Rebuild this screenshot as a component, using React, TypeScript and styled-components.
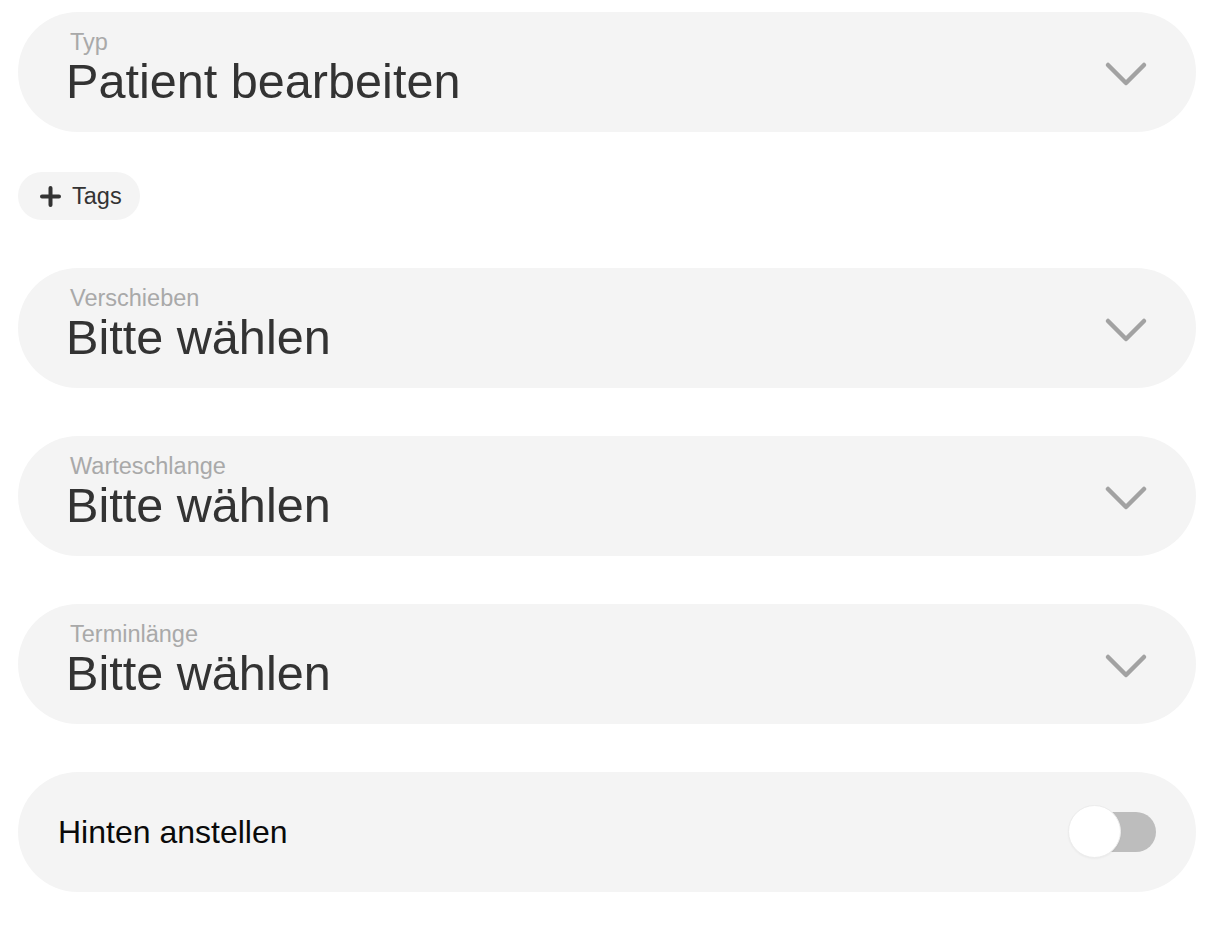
import React from "react";
import styled, { createGlobalStyle } from "styled-components";

const GlobalStyle = createGlobalStyle`
  html, body {
    margin: 0;
    padding: 0;
    background: #ffffff;
    font-family: "Liberation Sans", Arial, Helvetica, sans-serif;
  }
  * { box-sizing: border-box; }
`;

const Page = styled.div`
  display: flex;
  flex-direction: column;
  padding: 12px 18px;
`;

const Field = styled.div<{ $gapAfter: number }>`
  display: flex;
  align-items: center;
  height: 120px;
  border-radius: 60px;
  background: #f4f4f4;
  padding: 0 48px 0 48px;
  margin-bottom: ${(p) => p.$gapAfter}px;
`;

const FieldText = styled.div`
  flex: 1;
  display: flex;
  flex-direction: column;
  align-self: stretch;
  padding-top: 18px;
`;

const Label = styled.div`
  font-size: 23.5px;
  line-height: 24px;
  color: #a9a9a9;
  padding-left: 4px;
`;

const Value = styled.div`
  font-size: 48.6px;
  line-height: 48px;
  color: #333333;
  margin-top: 3px;
`;

const Chevron = styled.svg`
  width: 44px;
  height: 28px;
  margin-top: 6px;
  color: #a2a2a2;
  flex: none;
`;

const TagButton = styled.button`
  align-self: flex-start;
  display: flex;
  align-items: center;
  gap: 11px;
  height: 48px;
  padding: 0 18px 0 22px;
  border: none;
  border-radius: 24px;
  background: #f4f4f4;
  color: #333333;
  font-family: "Liberation Sans", Arial, Helvetica, sans-serif;
  font-size: 23.5px;
  margin-bottom: 48px;
`;

const PlusIcon = styled.svg`
  width: 21px;
  height: 21px;
  color: #333333;
  flex: none;
`;

const ToggleRow = styled.div`
  display: flex;
  align-items: center;
  justify-content: space-between;
  height: 120px;
  border-radius: 60px;
  background: #f4f4f4;
  padding: 0 40px 0 40px;
`;

const ToggleLabel = styled.div`
  font-size: 32px;
  line-height: 30px;
  color: #0a0a0a;
`;

const Track = styled.div`
  position: relative;
  width: 76px;
  height: 40px;
  border-radius: 20px;
  background: #bdbdbd;
`;

const Knob = styled.div`
  position: absolute;
  left: -12px;
  top: -7px;
  width: 53px;
  height: 53px;
  border-radius: 50%;
  background: #ffffff;
  border: 1px solid #ececec;
  box-shadow: 0 1px 2px rgba(0, 0, 0, 0.04);
`;

function ChevronDown() {
  return (
    <Chevron viewBox="0 0 44 28" fill="none">
      <polyline
        points="4,4 22,22 40,4"
        stroke="currentColor"
        strokeWidth="4.5"
        strokeLinecap="round"
        strokeLinejoin="round"
      />
    </Chevron>
  );
}

function Select({ label, value, gapAfter }: { label: string; value: string; gapAfter: number }) {
  return (
    <Field $gapAfter={gapAfter}>
      <FieldText>
        <Label>{label}</Label>
        <Value>{value}</Value>
      </FieldText>
      <ChevronDown />
    </Field>
  );
}

export default function App() {
  return (
    <>
      <GlobalStyle />
      <Page>
        <Select label="Typ" value="Patient bearbeiten" gapAfter={40} />
        <TagButton>
          <PlusIcon viewBox="0 0 21 21" fill="none">
            <path d="M10.5 2 V19 M2 10.5 H19" stroke="currentColor" strokeWidth="4" strokeLinecap="round" />
          </PlusIcon>
          Tags
        </TagButton>
        <Select label="Verschieben" value="Bitte wählen" gapAfter={48} />
        <Select label="Warteschlange" value="Bitte wählen" gapAfter={48} />
        <Select label="Terminlänge" value="Bitte wählen" gapAfter={48} />
        <ToggleRow>
          <ToggleLabel>Hinten anstellen</ToggleLabel>
          <Track>
            <Knob />
          </Track>
        </ToggleRow>
      </Page>
    </>
  );
}
